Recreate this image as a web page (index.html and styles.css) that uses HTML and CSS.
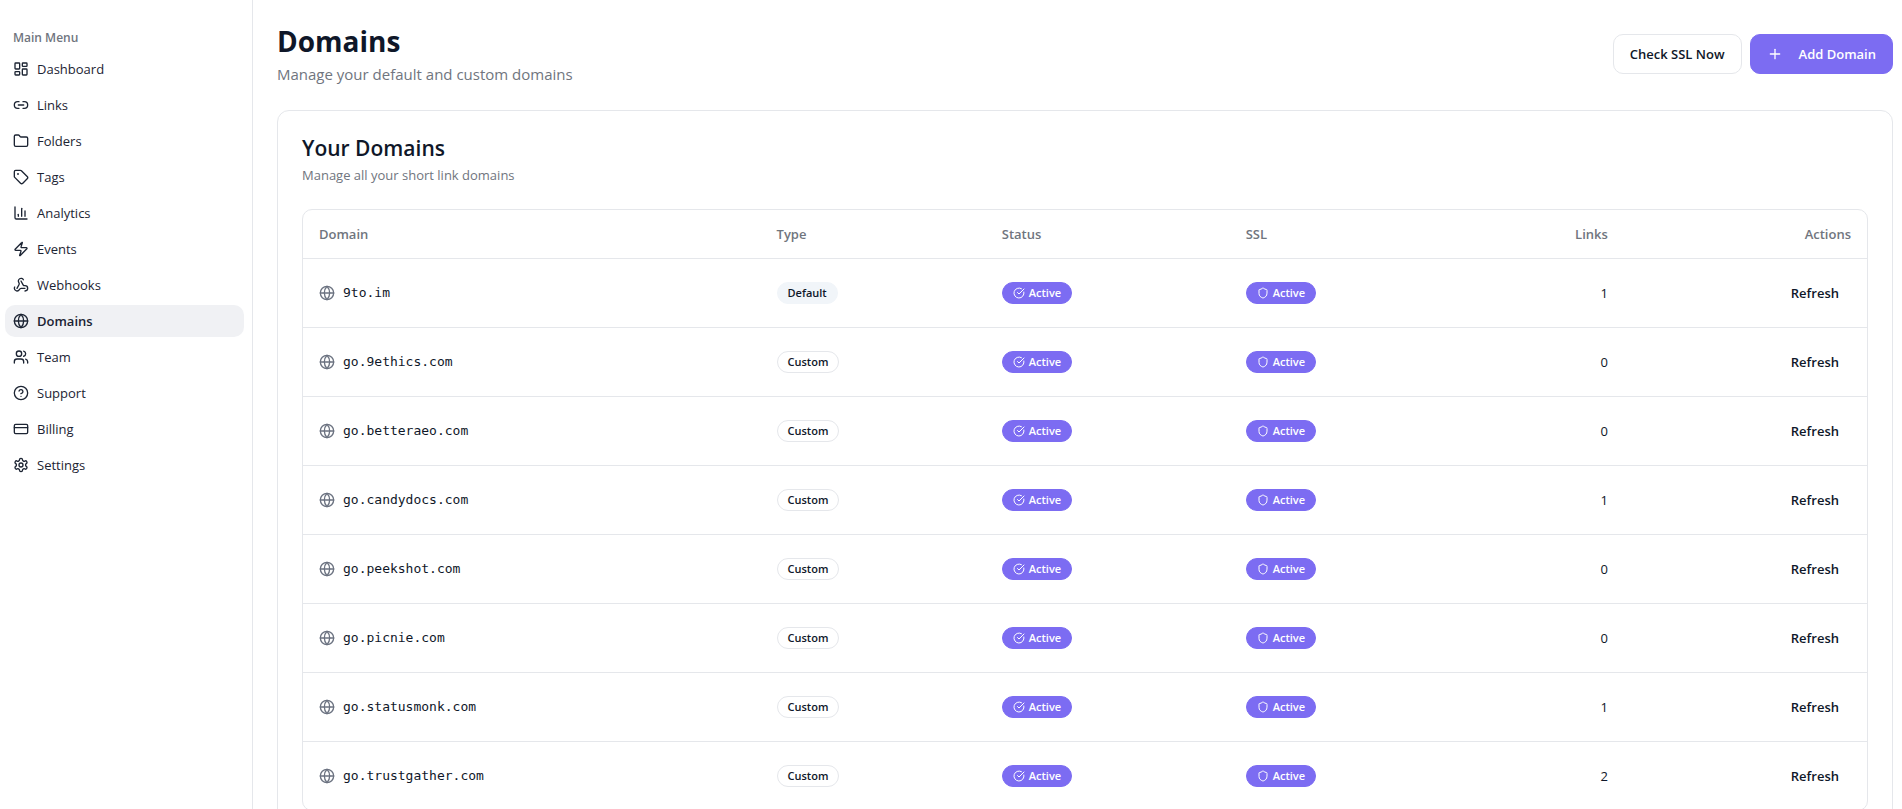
FILE: index.html
```html
<!DOCTYPE html>
<html lang="en">
<head>
  <meta charset="UTF-8">
  <meta name="viewport" content="width=device-width, initial-scale=1.0">
  <title>Domains</title>
  <link rel="stylesheet" href="styles.css">
</head>
<body>
  <svg class="sprite" aria-hidden="true">
    <symbol id="globe" viewBox="0 0 24 24"><circle cx="12" cy="12" r="10"/><path d="M12 2a14.5 14.5 0 0 0 0 20 14.5 14.5 0 0 0 0-20"/><path d="M2 12h20"/></symbol>
    <symbol id="check" viewBox="0 0 24 24"><path d="M21.801 10A10 10 0 1 1 17 3.335"/><path d="m9 11 3 3L22 4"/></symbol>
    <symbol id="shield" viewBox="0 0 24 24"><path d="M20 13c0 5-3.5 7.500-7.660 8.950a1 1 0 0 1-.67-.01C7.500 20.500 4 18 4 13V6a1 1 0 0 1 1-1c2 0 4.500-1.200 6.240-2.720a1.170 1.170 0 0 1 1.520 0C14.510 3.810 17 5 19 5a1 1 0 0 1 1 1z"/></symbol>
  </svg>
  <div class="layout">
    <aside class="sidebar">
      <div class="menu-label">Main Menu</div>
      <nav class="menu">
        <a href="#"><svg class="icon" viewBox="0 0 24 24"><rect width="7" height="9" x="3" y="3" rx="1"/><rect width="7" height="5" x="14" y="3" rx="1"/><rect width="7" height="9" x="14" y="12" rx="1"/><rect width="7" height="5" x="3" y="16" rx="1"/></svg>Dashboard</a>
        <a href="#"><svg class="icon" viewBox="0 0 24 24"><path d="M9 17H7A5 5 0 0 1 7 7h2"/><path d="M15 7h2a5 5 0 1 1 0 10h-2"/><path d="M8 12h8"/></svg>Links</a>
        <a href="#"><svg class="icon" viewBox="0 0 24 24"><path d="M20 20a2 2 0 0 0 2-2V8a2 2 0 0 0-2-2h-7.900a2 2 0 0 1-1.690-.9L9.600 3.900A2 2 0 0 0 7.930 3H4a2 2 0 0 0-2 2v13a2 2 0 0 0 2 2Z"/></svg>Folders</a>
        <a href="#"><svg class="icon" viewBox="0 0 24 24"><path d="M12.586 2.586A2 2 0 0 0 11.172 2H4a2 2 0 0 0-2 2v7.172a2 2 0 0 0 .586 1.414l8.704 8.704a2.426 2.426 0 0 0 3.420 0l6.580-6.580a2.426 2.426 0 0 0 0-3.420z"/><circle cx="7.500" cy="7.500" r=".5"/></svg>Tags</a>
        <a href="#"><svg class="icon" viewBox="0 0 24 24"><path d="M3 3v16a2 2 0 0 0 2 2h16"/><path d="M18 17V9"/><path d="M13 17V5"/><path d="M8 17v-3"/></svg>Analytics</a>
        <a href="#"><svg class="icon" viewBox="0 0 24 24"><path d="M4 14a1 1 0 0 1-.78-1.630l9.900-10.200a.5.5 0 0 1 .86.46l-1.920 6.020A1 1 0 0 0 13 10h7a1 1 0 0 1 .78 1.630l-9.900 10.200a.5.5 0 0 1-.86-.46l1.920-6.020A1 1 0 0 0 11 14z"/></svg>Events</a>
        <a href="#"><svg class="icon" viewBox="0 0 24 24"><path d="M18 16.980h-5.990c-1.100 0-1.950.94-2.480 1.900A4 4 0 0 1 2 17c.01-.7.200-1.400.57-2"/><path d="m6 17 3.130-5.780c.53-.97.1-2.180-.5-3.100a4 4 0 1 1 6.890-4.060"/><path d="m12 6 3.130 5.730C15.660 12.700 16.900 13 18 13a4 4 0 0 1 0 8"/></svg>Webhooks</a>
        <a href="#" class="active" aria-current="page"><svg class="icon"><use href="#globe"/></svg>Domains</a>
        <a href="#"><svg class="icon" viewBox="0 0 24 24"><path d="M16 21v-2a4 4 0 0 0-4-4H6a4 4 0 0 0-4 4v2"/><circle cx="9" cy="7" r="4"/><path d="M22 21v-2a4 4 0 0 0-3-3.870"/><path d="M16 3.130a4 4 0 0 1 0 7.750"/></svg>Team</a>
        <a href="#"><svg class="icon" viewBox="0 0 24 24"><circle cx="12" cy="12" r="10"/><path d="M9.090 9a3 3 0 0 1 5.830 1c0 2-3 3-3 3"/><path d="M12 17h.01"/></svg>Support</a>
        <a href="#"><svg class="icon" viewBox="0 0 24 24"><rect width="20" height="14" x="2" y="5" rx="2"/><path d="M2 10h20"/></svg>Billing</a>
        <a href="#"><svg class="icon" viewBox="0 0 24 24"><path d="M12.220 2h-.44a2 2 0 0 0-2 2v.18a2 2 0 0 1-1 1.730l-.43.25a2 2 0 0 1-2 0l-.15-.08a2 2 0 0 0-2.730.73l-.22.38a2 2 0 0 0 .73 2.730l.15.1a2 2 0 0 1 1 1.720v.51a2 2 0 0 1-1 1.740l-.15.09a2 2 0 0 0-.73 2.730l.22.38a2 2 0 0 0 2.730.73l.15-.08a2 2 0 0 1 2 0l.43.25a2 2 0 0 1 1 1.730V20a2 2 0 0 0 2 2h.44a2 2 0 0 0 2-2v-.18a2 2 0 0 1 1-1.730l.43-.25a2 2 0 0 1 2 0l.15.08a2 2 0 0 0 2.730-.73l.22-.39a2 2 0 0 0-.73-2.730l-.15-.08a2 2 0 0 1-1-1.740v-.5a2 2 0 0 1 1-1.740l.15-.09a2 2 0 0 0 .73-2.730l-.22-.38a2 2 0 0 0-2.730-.73l-.15.08a2 2 0 0 1-2 0l-.43-.25a2 2 0 0 1-1-1.730V4a2 2 0 0 0-2-2z"/><circle cx="12" cy="12" r="3"/></svg>Settings</a>
      </nav>
    </aside>
    <main class="content">
      <header class="page-header">
        <div>
          <h1>Domains</h1>
          <p>Manage your default and custom domains</p>
        </div>
        <div class="actions">
          <button type="button" class="btn btn-outline">Check SSL Now</button>
          <button type="button" class="btn btn-primary"><svg class="icon" viewBox="0 0 24 24"><path d="M5 12h14"/><path d="M12 5v14"/></svg>Add Domain</button>
        </div>
      </header>
      <section class="card">
        <h2>Your Domains</h2>
        <p class="card-description">Manage all your short link domains</p>
        <div class="table-wrap">
          <table>
            <thead>
              <tr>
                <th>Domain</th>
                <th class="col-type">Type</th>
                <th class="col-status">Status</th>
                <th class="col-ssl">SSL</th>
                <th class="col-links">Links</th>
                <th class="col-actions">Actions</th>
              </tr>
            </thead>
            <tbody>
              <tr>
                <td><div class="domain"><svg class="icon"><use href="#globe"/></svg>9to.im</div></td>
                <td><span class="badge badge-secondary">Default</span></td>
                <td><span class="badge badge-active"><svg class="icon"><use href="#check"/></svg>Active</span></td>
                <td><span class="badge badge-active"><svg class="icon"><use href="#shield"/></svg>Active</span></td>
                <td class="col-links">1</td>
                <td class="col-actions"><button type="button" class="btn-ghost">Refresh</button></td>
              </tr>
              <tr>
                <td><div class="domain"><svg class="icon"><use href="#globe"/></svg>go.9ethics.com</div></td>
                <td><span class="badge">Custom</span></td>
                <td><span class="badge badge-active"><svg class="icon"><use href="#check"/></svg>Active</span></td>
                <td><span class="badge badge-active"><svg class="icon"><use href="#shield"/></svg>Active</span></td>
                <td class="col-links">0</td>
                <td class="col-actions"><button type="button" class="btn-ghost">Refresh</button></td>
              </tr>
              <tr>
                <td><div class="domain"><svg class="icon"><use href="#globe"/></svg>go.betteraeo.com</div></td>
                <td><span class="badge">Custom</span></td>
                <td><span class="badge badge-active"><svg class="icon"><use href="#check"/></svg>Active</span></td>
                <td><span class="badge badge-active"><svg class="icon"><use href="#shield"/></svg>Active</span></td>
                <td class="col-links">0</td>
                <td class="col-actions"><button type="button" class="btn-ghost">Refresh</button></td>
              </tr>
              <tr>
                <td><div class="domain"><svg class="icon"><use href="#globe"/></svg>go.candydocs.com</div></td>
                <td><span class="badge">Custom</span></td>
                <td><span class="badge badge-active"><svg class="icon"><use href="#check"/></svg>Active</span></td>
                <td><span class="badge badge-active"><svg class="icon"><use href="#shield"/></svg>Active</span></td>
                <td class="col-links">1</td>
                <td class="col-actions"><button type="button" class="btn-ghost">Refresh</button></td>
              </tr>
              <tr>
                <td><div class="domain"><svg class="icon"><use href="#globe"/></svg>go.peekshot.com</div></td>
                <td><span class="badge">Custom</span></td>
                <td><span class="badge badge-active"><svg class="icon"><use href="#check"/></svg>Active</span></td>
                <td><span class="badge badge-active"><svg class="icon"><use href="#shield"/></svg>Active</span></td>
                <td class="col-links">0</td>
                <td class="col-actions"><button type="button" class="btn-ghost">Refresh</button></td>
              </tr>
              <tr>
                <td><div class="domain"><svg class="icon"><use href="#globe"/></svg>go.picnie.com</div></td>
                <td><span class="badge">Custom</span></td>
                <td><span class="badge badge-active"><svg class="icon"><use href="#check"/></svg>Active</span></td>
                <td><span class="badge badge-active"><svg class="icon"><use href="#shield"/></svg>Active</span></td>
                <td class="col-links">0</td>
                <td class="col-actions"><button type="button" class="btn-ghost">Refresh</button></td>
              </tr>
              <tr>
                <td><div class="domain"><svg class="icon"><use href="#globe"/></svg>go.statusmonk.com</div></td>
                <td><span class="badge">Custom</span></td>
                <td><span class="badge badge-active"><svg class="icon"><use href="#check"/></svg>Active</span></td>
                <td><span class="badge badge-active"><svg class="icon"><use href="#shield"/></svg>Active</span></td>
                <td class="col-links">1</td>
                <td class="col-actions"><button type="button" class="btn-ghost">Refresh</button></td>
              </tr>
              <tr>
                <td><div class="domain"><svg class="icon"><use href="#globe"/></svg>go.trustgather.com</div></td>
                <td><span class="badge">Custom</span></td>
                <td><span class="badge badge-active"><svg class="icon"><use href="#check"/></svg>Active</span></td>
                <td><span class="badge badge-active"><svg class="icon"><use href="#shield"/></svg>Active</span></td>
                <td class="col-links">2</td>
                <td class="col-actions"><button type="button" class="btn-ghost">Refresh</button></td>
              </tr>
            </tbody>
          </table>
        </div>
      </section>
    </main>
  </div>
</body>
</html>
```
FILE: styles.css
```css
* {
  box-sizing: border-box;
}
body {
  margin: 0;
  background-color: #fff;
  color: #0f1729;
  font-family: "Segoe UI", "Open Sans", "Noto Sans", sans-serif;
  font-size: 13px;
  line-height: 20px;
}
h1, h2, p {
  margin: 0;
}
button {
  font: inherit;
  font-weight: 600;
  color: inherit;
  cursor: pointer;
}
.sprite {
  display: none;
}
.icon {
  width: 16px;
  height: 16px;
  flex-shrink: 0;
  fill: none;
  stroke: currentColor;
  stroke-width: 2;
  stroke-linecap: round;
  stroke-linejoin: round;
}
.layout {
  display: flex;
  height: 100vh;
  overflow: hidden;
}

/* sidebar */
.sidebar {
  width: 253px;
  flex-shrink: 0;
  padding: 22px 8px 0 5px;
  border-right: 1px solid #e5e7eb;
}
.menu-label {
  height: 31px;
  padding: 0 8px;
  font-size: 12px;
  font-weight: 600;
  line-height: 32px;
  color: #70757e;
}
.menu {
  display: flex;
  flex-direction: column;
  gap: 4px;
}
.menu a {
  display: flex;
  align-items: center;
  gap: 8px;
  height: 32px;
  padding: 0 8px;
  border-radius: 10px;
  color: #1c2433;
  text-decoration: none;
}
.menu a.active {
  background-color: #f0f1f4;
  font-weight: 600;
}

/* page */
.content {
  flex: 1;
  min-width: 0;
  padding: 22px 9px 24px 24px;
}
.page-header {
  display: flex;
  justify-content: space-between;
  align-items: center;
  margin-bottom: 24px;
}
.page-header h1 {
  margin-bottom: 2px;
  font-size: 28px;
  font-weight: 700;
  line-height: 38px;
}
.page-header p {
  font-size: 15px;
  line-height: 24px;
  color: #70757e;
}
.actions {
  display: flex;
  gap: 8px;
}
.btn {
  display: flex;
  align-items: center;
  gap: 16px;
  height: 40px;
  padding: 0 16px;
  border: 1px solid #e5e7eb;
  border-radius: 10px;
  background-color: #fff;
}
.btn-primary {
  border-color: #7c6cf2;
  background-color: #7c6cf2;
  color: #fff;
}
.card {
  padding: 24px;
  border: 1px solid #e5e7eb;
  border-radius: 12px;
}
.card h2 {
  margin-bottom: 4px;
  font-size: 21px;
  font-weight: 600;
  line-height: 26px;
}
.card-description {
  margin-bottom: 24px;
  color: #70757e;
}

/* table */
.table-wrap {
  border: 1px solid #e5e7eb;
  border-radius: 10px;
}
table {
  width: 100%;
  table-layout: fixed;
  border-spacing: 0;
}
th {
  height: 49px;
  padding: 0 16px;
  border-bottom: 1px solid #e5e7eb;
  font-weight: 600;
  text-align: left;
  color: #70757e;
}
td {
  height: 69px;
  padding: 0 16px;
  border-bottom: 1px solid #e5e7eb;
}
tbody tr:last-child td {
  height: 68px;
  border-bottom: 0;
}
.col-type {
  width: 14.4%;
}
.col-status,
.col-ssl {
  width: 15.6%;
}
th.col-links {
  width: 9.6%;
}
th.col-actions {
  width: 15.55%;
}
.col-links,
.col-actions {
  text-align: right;
}
.domain {
  display: flex;
  align-items: center;
  gap: 8px;
  font-family: Consolas, "DejaVu Sans Mono", monospace;
}
.domain .icon {
  color: #6b7280;
}
.badge {
  display: inline-flex;
  align-items: center;
  gap: 4px;
  height: 22px;
  padding: 0 10px;
  border: 1px solid #e5e7eb;
  border-radius: 11px;
  font-size: 11px;
  font-weight: 600;
  line-height: 16px;
  vertical-align: middle;
}
.badge .icon {
  width: 12px;
  height: 12px;
}
.badge-secondary {
  border-color: #f1f5f9;
  background-color: #f1f5f9;
}
.badge-active {
  border-color: #7c6cf2;
  background-color: #7c6cf2;
  color: #fff;
}
.btn-ghost {
  height: 36px;
  padding: 0 12px;
  border: 0;
  border-radius: 10px;
  background: none;
}
```
